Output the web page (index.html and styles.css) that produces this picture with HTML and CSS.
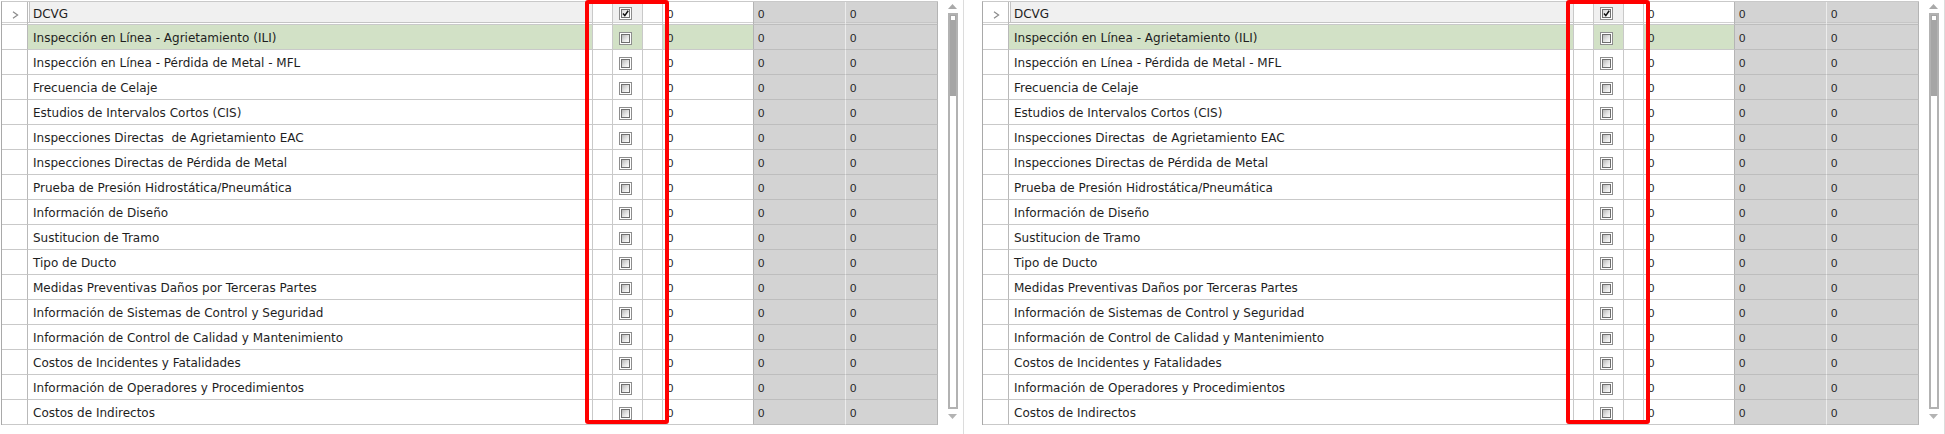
FILE: index.html
```html
<!DOCTYPE html>
<html lang="es">
<head>
<meta charset="utf-8">
<title>Grid</title>
<link rel="stylesheet" href="styles.css">
</head>
<body>
<div class="panel">
  <div class="grid">
    <div class="row first"><div class="c exp"><svg class="chev" width="7" height="8" viewBox="0 0 7 8"><polyline points="1,0.8 5.6,4 1,7.2" fill="none" stroke="#8a8a8a" stroke-width="1.2"/></svg></div><div class="c name focus">DCVG</div><div class="c pad"></div><div class="c chk"><span class="cb"><span class="cbi"><svg width="7" height="7" viewBox="0 0 7 7"><polyline points="1,3.6 2.8,5.6 6.2,0.8" fill="none" stroke="#111" stroke-width="1.5"/></svg></span></span></div><div class="c pad"></div><div class="c val">0</div><div class="c g1">0</div><div class="c g2">0</div></div>
    <div class="row hl"><div class="c exp"></div><div class="c name">Inspección en Línea - Agrietamiento (ILI)</div><div class="c pad"></div><div class="c chk"><span class="cb"><span class="cbi"></span></span></div><div class="c pad"></div><div class="c val">0</div><div class="c g1">0</div><div class="c g2">0</div></div>
    <div class="row"><div class="c exp"></div><div class="c name">Inspección en Línea - Pérdida de Metal - MFL</div><div class="c pad"></div><div class="c chk"><span class="cb"><span class="cbi"></span></span></div><div class="c pad"></div><div class="c val">0</div><div class="c g1">0</div><div class="c g2">0</div></div>
    <div class="row"><div class="c exp"></div><div class="c name">Frecuencia de Celaje</div><div class="c pad"></div><div class="c chk"><span class="cb"><span class="cbi"></span></span></div><div class="c pad"></div><div class="c val">0</div><div class="c g1">0</div><div class="c g2">0</div></div>
    <div class="row"><div class="c exp"></div><div class="c name">Estudios de Intervalos Cortos (CIS)</div><div class="c pad"></div><div class="c chk"><span class="cb"><span class="cbi"></span></span></div><div class="c pad"></div><div class="c val">0</div><div class="c g1">0</div><div class="c g2">0</div></div>
    <div class="row"><div class="c exp"></div><div class="c name">Inspecciones Directas&nbsp; de Agrietamiento EAC</div><div class="c pad"></div><div class="c chk"><span class="cb"><span class="cbi"></span></span></div><div class="c pad"></div><div class="c val">0</div><div class="c g1">0</div><div class="c g2">0</div></div>
    <div class="row"><div class="c exp"></div><div class="c name">Inspecciones Directas de Pérdida de Metal</div><div class="c pad"></div><div class="c chk"><span class="cb"><span class="cbi"></span></span></div><div class="c pad"></div><div class="c val">0</div><div class="c g1">0</div><div class="c g2">0</div></div>
    <div class="row"><div class="c exp"></div><div class="c name">Prueba de Presión Hidrostática/Pneumática</div><div class="c pad"></div><div class="c chk"><span class="cb"><span class="cbi"></span></span></div><div class="c pad"></div><div class="c val">0</div><div class="c g1">0</div><div class="c g2">0</div></div>
    <div class="row"><div class="c exp"></div><div class="c name">Información de Diseño</div><div class="c pad"></div><div class="c chk"><span class="cb"><span class="cbi"></span></span></div><div class="c pad"></div><div class="c val">0</div><div class="c g1">0</div><div class="c g2">0</div></div>
    <div class="row"><div class="c exp"></div><div class="c name">Sustitucion de Tramo</div><div class="c pad"></div><div class="c chk"><span class="cb"><span class="cbi"></span></span></div><div class="c pad"></div><div class="c val">0</div><div class="c g1">0</div><div class="c g2">0</div></div>
    <div class="row"><div class="c exp"></div><div class="c name">Tipo de Ducto</div><div class="c pad"></div><div class="c chk"><span class="cb"><span class="cbi"></span></span></div><div class="c pad"></div><div class="c val">0</div><div class="c g1">0</div><div class="c g2">0</div></div>
    <div class="row"><div class="c exp"></div><div class="c name">Medidas Preventivas Daños por Terceras Partes</div><div class="c pad"></div><div class="c chk"><span class="cb"><span class="cbi"></span></span></div><div class="c pad"></div><div class="c val">0</div><div class="c g1">0</div><div class="c g2">0</div></div>
    <div class="row"><div class="c exp"></div><div class="c name">Información de Sistemas de Control y Seguridad</div><div class="c pad"></div><div class="c chk"><span class="cb"><span class="cbi"></span></span></div><div class="c pad"></div><div class="c val">0</div><div class="c g1">0</div><div class="c g2">0</div></div>
    <div class="row"><div class="c exp"></div><div class="c name">Información de Control de Calidad y Mantenimiento</div><div class="c pad"></div><div class="c chk"><span class="cb"><span class="cbi"></span></span></div><div class="c pad"></div><div class="c val">0</div><div class="c g1">0</div><div class="c g2">0</div></div>
    <div class="row"><div class="c exp"></div><div class="c name">Costos de Incidentes y Fatalidades</div><div class="c pad"></div><div class="c chk"><span class="cb"><span class="cbi"></span></span></div><div class="c pad"></div><div class="c val">0</div><div class="c g1">0</div><div class="c g2">0</div></div>
    <div class="row"><div class="c exp"></div><div class="c name">Información de Operadores y Procedimientos</div><div class="c pad"></div><div class="c chk"><span class="cb"><span class="cbi"></span></span></div><div class="c pad"></div><div class="c val">0</div><div class="c g1">0</div><div class="c g2">0</div></div>
    <div class="row"><div class="c exp"></div><div class="c name">Costos de Indirectos</div><div class="c pad"></div><div class="c chk"><span class="cb"><span class="cbi"></span></span></div><div class="c pad"></div><div class="c val">0</div><div class="c g1">0</div><div class="c g2">0</div></div>
  </div>
  <div class="sz">
    <svg class="arr-up" width="9" height="5" viewBox="0 0 9 5"><polygon points="0,5 4.5,0 9,5" fill="#a9a9a9"/></svg>
    <div class="track"><div class="thumb"><div class="thumb-top"></div></div></div>
    <svg class="arr-dn" width="9" height="5" viewBox="0 0 9 5"><polygon points="0,0 9,0 4.5,5" fill="#b3b3b3"/></svg>
  </div>
  <div class="redbox"></div>
</div>
<div class="panel">
  <div class="grid">
    <div class="row first"><div class="c exp"><svg class="chev" width="7" height="8" viewBox="0 0 7 8"><polyline points="1,0.8 5.6,4 1,7.2" fill="none" stroke="#8a8a8a" stroke-width="1.2"/></svg></div><div class="c name focus">DCVG</div><div class="c pad"></div><div class="c chk"><span class="cb"><span class="cbi"><svg width="7" height="7" viewBox="0 0 7 7"><polyline points="1,3.6 2.8,5.6 6.2,0.8" fill="none" stroke="#111" stroke-width="1.5"/></svg></span></span></div><div class="c pad"></div><div class="c val">0</div><div class="c g1">0</div><div class="c g2">0</div></div>
    <div class="row hl"><div class="c exp"></div><div class="c name">Inspección en Línea - Agrietamiento (ILI)</div><div class="c pad"></div><div class="c chk"><span class="cb"><span class="cbi"></span></span></div><div class="c pad"></div><div class="c val">0</div><div class="c g1">0</div><div class="c g2">0</div></div>
    <div class="row"><div class="c exp"></div><div class="c name">Inspección en Línea - Pérdida de Metal - MFL</div><div class="c pad"></div><div class="c chk"><span class="cb"><span class="cbi"></span></span></div><div class="c pad"></div><div class="c val">0</div><div class="c g1">0</div><div class="c g2">0</div></div>
    <div class="row"><div class="c exp"></div><div class="c name">Frecuencia de Celaje</div><div class="c pad"></div><div class="c chk"><span class="cb"><span class="cbi"></span></span></div><div class="c pad"></div><div class="c val">0</div><div class="c g1">0</div><div class="c g2">0</div></div>
    <div class="row"><div class="c exp"></div><div class="c name">Estudios de Intervalos Cortos (CIS)</div><div class="c pad"></div><div class="c chk"><span class="cb"><span class="cbi"></span></span></div><div class="c pad"></div><div class="c val">0</div><div class="c g1">0</div><div class="c g2">0</div></div>
    <div class="row"><div class="c exp"></div><div class="c name">Inspecciones Directas&nbsp; de Agrietamiento EAC</div><div class="c pad"></div><div class="c chk"><span class="cb"><span class="cbi"></span></span></div><div class="c pad"></div><div class="c val">0</div><div class="c g1">0</div><div class="c g2">0</div></div>
    <div class="row"><div class="c exp"></div><div class="c name">Inspecciones Directas de Pérdida de Metal</div><div class="c pad"></div><div class="c chk"><span class="cb"><span class="cbi"></span></span></div><div class="c pad"></div><div class="c val">0</div><div class="c g1">0</div><div class="c g2">0</div></div>
    <div class="row"><div class="c exp"></div><div class="c name">Prueba de Presión Hidrostática/Pneumática</div><div class="c pad"></div><div class="c chk"><span class="cb"><span class="cbi"></span></span></div><div class="c pad"></div><div class="c val">0</div><div class="c g1">0</div><div class="c g2">0</div></div>
    <div class="row"><div class="c exp"></div><div class="c name">Información de Diseño</div><div class="c pad"></div><div class="c chk"><span class="cb"><span class="cbi"></span></span></div><div class="c pad"></div><div class="c val">0</div><div class="c g1">0</div><div class="c g2">0</div></div>
    <div class="row"><div class="c exp"></div><div class="c name">Sustitucion de Tramo</div><div class="c pad"></div><div class="c chk"><span class="cb"><span class="cbi"></span></span></div><div class="c pad"></div><div class="c val">0</div><div class="c g1">0</div><div class="c g2">0</div></div>
    <div class="row"><div class="c exp"></div><div class="c name">Tipo de Ducto</div><div class="c pad"></div><div class="c chk"><span class="cb"><span class="cbi"></span></span></div><div class="c pad"></div><div class="c val">0</div><div class="c g1">0</div><div class="c g2">0</div></div>
    <div class="row"><div class="c exp"></div><div class="c name">Medidas Preventivas Daños por Terceras Partes</div><div class="c pad"></div><div class="c chk"><span class="cb"><span class="cbi"></span></span></div><div class="c pad"></div><div class="c val">0</div><div class="c g1">0</div><div class="c g2">0</div></div>
    <div class="row"><div class="c exp"></div><div class="c name">Información de Sistemas de Control y Seguridad</div><div class="c pad"></div><div class="c chk"><span class="cb"><span class="cbi"></span></span></div><div class="c pad"></div><div class="c val">0</div><div class="c g1">0</div><div class="c g2">0</div></div>
    <div class="row"><div class="c exp"></div><div class="c name">Información de Control de Calidad y Mantenimiento</div><div class="c pad"></div><div class="c chk"><span class="cb"><span class="cbi"></span></span></div><div class="c pad"></div><div class="c val">0</div><div class="c g1">0</div><div class="c g2">0</div></div>
    <div class="row"><div class="c exp"></div><div class="c name">Costos de Incidentes y Fatalidades</div><div class="c pad"></div><div class="c chk"><span class="cb"><span class="cbi"></span></span></div><div class="c pad"></div><div class="c val">0</div><div class="c g1">0</div><div class="c g2">0</div></div>
    <div class="row"><div class="c exp"></div><div class="c name">Información de Operadores y Procedimientos</div><div class="c pad"></div><div class="c chk"><span class="cb"><span class="cbi"></span></span></div><div class="c pad"></div><div class="c val">0</div><div class="c g1">0</div><div class="c g2">0</div></div>
    <div class="row"><div class="c exp"></div><div class="c name">Costos de Indirectos</div><div class="c pad"></div><div class="c chk"><span class="cb"><span class="cbi"></span></span></div><div class="c pad"></div><div class="c val">0</div><div class="c g1">0</div><div class="c g2">0</div></div>
  </div>
  <div class="sz">
    <svg class="arr-up" width="9" height="5" viewBox="0 0 9 5"><polygon points="0,5 4.5,0 9,5" fill="#a9a9a9"/></svg>
    <div class="track"><div class="thumb"><div class="thumb-top"></div></div></div>
    <svg class="arr-dn" width="9" height="5" viewBox="0 0 9 5"><polygon points="0,0 9,0 4.5,5" fill="#b3b3b3"/></svg>
  </div>
  <div class="redbox"></div>
</div>
</body>
</html>
```

FILE: styles.css
```css
html, body {
  margin: 0;
  padding: 0;
  background: #ffffff;
}
body {
  width: 1945px;
  height: 434px;
  overflow: hidden;
  display: flex;
  gap: 17px;
  font-family: "DejaVu Sans", "Liberation Sans", sans-serif;
  color: #1e1e1e;
}
.panel {
  position: relative;
  width: 964px;
  height: 434px;
  box-sizing: border-box;
  border-right: 1px solid #dcdcdc;
  display: flex;
  align-items: flex-start;
}
.grid {
  margin: 1px 0 0 1px;
  width: 936px;
  border-left: 1px solid #a9a9a9;
  border-top: 1px solid #c9c9c9;
}
.row {
  display: grid;
  grid-template-columns: 26px 565px 20px 30px 20px 91px 92px 92px;
  height: 25px;
}
.row.first {
  height: 23px;
}
.c {
  box-sizing: border-box;
  border-right: 1px solid #c9c9c9;
  border-bottom: 1px solid #c9c9c9;
  overflow: hidden;
  white-space: nowrap;
  background: #ffffff;
}
.exp {
  border-right-color: #b9b9b9;
}
.chev {
  display: block;
  margin: 9px 0 0 10px;
}
.name {
  font-size: 12px;
  line-height: 23px;
  padding: 2px 0 0 5px;
}
.val, .g1, .g2 {
  font-family: "Liberation Sans", Arial, sans-serif;
  font-size: 11.5px;
  line-height: 23px;
  padding: 2px 0 0 4px;
}
.val {
  border-right-color: #b4b4b4;
}
.g1, .g2 {
  background: #d3d3d3;
  border-bottom-color: #bdbdbd;
}
.g1 {
  border-right-color: #ececec;
}
.g2 {
  border-right-color: #b4b4b4;
}
.chk {
  padding: 7px 0 0 6px;
}
.first .chk {
  padding-top: 5px;
}
.first .name,
.first .val,
.first .g1,
.first .g2 {
  padding-top: 1px;
}
.first .name,
.first .chk {
  background: #f0f0f0;
}
.first .c {
  box-shadow: inset 0 -1px 0 #ffffff, inset 0 -2px 0 #d2d2d2;
}
.first .g1, .first .g2 {
  box-shadow: inset 0 -1px 0 #dcdcdc, inset 0 -2px 0 #c6c6c6;
}
.first .name.focus {
  box-shadow: inset 0 -1px 0 #ffffff, inset 0 -2px 0 #c4c4c4, inset 1px 0 0 #ffffff, inset 2px 0 0 #c4c4c4;
}
.hl .name,
.hl .chk,
.hl .val {
  background: #d2e1c6;
}
.cb {
  display: block;
  width: 13px;
  height: 13px;
  box-sizing: border-box;
  border: 1px solid #8d8d8d;
  padding: 1px;
  background: #ffffff;
}
.cbi {
  display: block;
  width: 9px;
  height: 9px;
  box-sizing: border-box;
  border: 1px solid #6f6f6f;
  background: linear-gradient(135deg, #b9b9b9 0%, #e4e4e4 55%, #ffffff 100%);
}
.cbi svg {
  display: block;
}
.first .cbi {
  background: linear-gradient(135deg, #d8d8d8 0%, #f4f4f4 60%, #ffffff 100%);
}
.sz {
  flex: 1;
  height: 434px;
  box-sizing: border-box;
  padding-left: 10px;
  display: flex;
  flex-direction: column;
  align-items: flex-start;
}
.arr-up {
  display: block;
  margin-top: 4px;
}
.track {
  margin-top: 4px;
  width: 10px;
  height: 396px;
  box-sizing: border-box;
  border: 2px solid #b2b2b2;
  background: #ffffff;
}
.thumb {
  height: 81px;
  background: #a5a5a5;
  padding: 1px 1px 0 1px;
  box-sizing: border-box;
}
.thumb-top {
  height: 4px;
  background: #ffffff;
}
.arr-dn {
  display: block;
  margin-top: 5px;
}
.redbox {
  position: absolute;
  left: 585px;
  top: 0;
  width: 84px;
  height: 424px;
  box-sizing: border-box;
  border: 4px solid #ff0000;
  border-radius: 3px;
}
```
